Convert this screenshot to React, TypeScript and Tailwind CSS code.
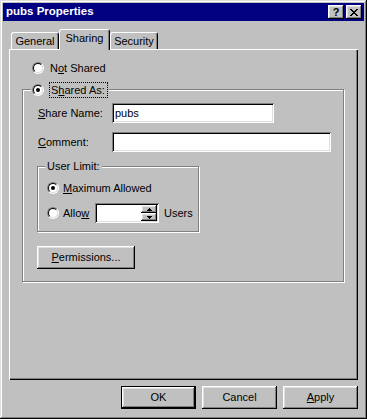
const raised =
  "shadow-[inset_-1px_-1px_#000,inset_1px_1px_#fff,inset_-2px_-2px_#808080,inset_2px_2px_#dfdfdf]"
const sunken =
  "shadow-[inset_1px_1px_#808080,inset_-1px_-1px_#fff,inset_2px_2px_#000,inset_-2px_-2px_#dfdfdf]"
const etched = "border border-[#808080] shadow-[inset_1px_1px_#fff,1px_1px_#fff]"

function Radio({ checked }: { checked?: boolean }) {
  return (
    <span className="block h-[12px] w-[12px] shrink-0 rounded-full border border-t-[#808080] border-l-[#808080] border-b-white border-r-white">
      <span className="flex h-full w-full items-center justify-center rounded-full border border-t-black border-l-black border-b-[#dfdfdf] border-r-[#dfdfdf] bg-white">
        {checked && <span className="h-[4px] w-[4px] rounded-full bg-black" />}
      </span>
    </span>
  )
}

const closeRows = ["11000011", "01100110", "00111100", "00011000", "00111100", "01100110", "11000011"]

function CloseGlyph() {
  return (
    <svg width="8" height="7" viewBox="0 0 8 7" shapeRendering="crispEdges">
      {closeRows.map((row, y) =>
        row.split("").map((c, x) => (c === "1" ? <rect key={`${x}-${y}`} x={x} y={y} width="1" height="1" fill="#000" /> : null))
      )}
    </svg>
  )
}

function Arrow({ up }: { up?: boolean }) {
  return (
    <svg width="5" height="3" viewBox="0 0 5 3" shapeRendering="crispEdges">
      {up ? (
        <>
          <rect x="2" y="0" width="1" height="1" fill="#000" />
          <rect x="1" y="1" width="3" height="1" fill="#000" />
          <rect x="0" y="2" width="5" height="1" fill="#000" />
        </>
      ) : (
        <>
          <rect x="0" y="0" width="5" height="1" fill="#000" />
          <rect x="1" y="1" width="3" height="1" fill="#000" />
          <rect x="2" y="2" width="1" height="1" fill="#000" />
        </>
      )}
    </svg>
  )
}

export default function App() {
  return (
    <div className="h-[419px] w-[367px] bg-[#c0c0c0] p-[3px] font-['Liberation_Sans',Arial,sans-serif] text-[11px] leading-none text-black shadow-[inset_-1px_-1px_#000,inset_1px_1px_#dfdfdf,inset_-2px_-2px_#808080,inset_2px_2px_#fff]">
      {/* Title bar */}
      <div className="flex h-[18px] items-center bg-[#000080] pl-[3px] pr-[2px]">
        <span className="flex-1 text-[11.5px] font-bold text-white">pubs Properties</span>
        <div className={`flex h-[14px] w-[16px] items-center justify-center bg-[#c0c0c0] text-[11px] font-bold ${raised}`}>?</div>
        <div className={`ml-[2px] flex h-[14px] w-[16px] items-center justify-center bg-[#c0c0c0] ${raised}`}>
          <CloseGlyph />
        </div>
      </div>

      {/* Tabs */}
      <div className="mx-[6px] mt-[8px] flex h-[21px] items-end pl-[2px]">
        <div className="mb-px flex h-[17px] w-[48px] items-center justify-center rounded-t-[3px] border-l border-r border-t border-l-white border-r-black border-t-white shadow-[inset_-1px_0_#808080]">
          General
        </div>
        <div className="relative z-10 flex h-[21px] w-[51px] justify-center rounded-t-[3px] border-l border-r border-t border-l-white border-r-black border-t-white bg-[#c0c0c0] pt-[3px] shadow-[inset_-1px_0_#808080]">
          Sharing
        </div>
        <div className="mb-px flex h-[17px] w-[48px] items-center justify-center rounded-t-[3px] border-l border-r border-t border-l-white border-r-black border-t-white shadow-[inset_-1px_0_#808080]">
          Security
        </div>
      </div>

      {/* Panel */}
      <div className="mx-[6px] -mt-px h-[331px] pl-[13px] pt-[11px] shadow-[inset_1px_1px_#fff,inset_-1px_-1px_#000,inset_-2px_-2px_#808080]">
        <div className="ml-[10px] flex h-[16px] items-center">
          <Radio />
          <span className="ml-[6px]">
            N<span className="underline">o</span>t Shared
          </span>
        </div>

        <div className={`relative mt-[13px] w-[322px] pb-[12px] pl-[14px] pt-[13px] ${etched}`}>
          <div className="absolute left-[8px] top-[-8px] flex h-[16px] items-center bg-[#c0c0c0] px-[1px]">
            <Radio checked />
            <span className="ml-[5px] flex h-[16px] items-center border border-dotted border-black px-[1px] pr-[2px]">
              S<span className="underline">h</span>ared As:
            </span>
          </div>

          <div className="flex h-[20px] items-center">
            <span className="ml-px w-[74px]">
              <span className="underline">S</span>hare Name:
            </span>
            <div className={`flex h-[20px] w-[162px] items-center bg-white pl-[3px] ${sunken}`}>pubs</div>
          </div>

          <div className="mt-[9px] flex h-[20px] items-center">
            <span className="ml-px w-[74px]">
              <span className="underline">C</span>omment:
            </span>
            <div className={`h-[20px] w-[219px] bg-white ${sunken}`} />
          </div>

          <div className={`relative mt-[14px] h-[66px] w-[162px] pl-[9px] pt-[13px] ${etched}`}>
            <span className="absolute left-[7px] top-[-9px] flex h-[16px] items-center bg-[#c0c0c0] px-[2px]">User Limit:</span>
            <div className="flex h-[16px] items-center">
              <Radio checked />
              <span className="ml-[4px]">
                <span className="underline">M</span>aximum Allowed
              </span>
            </div>
            <div className="mt-[7px] flex h-[20px] items-center">
              <Radio />
              <span className="ml-[4px] w-[32px]">
                Allo<span className="underline">w</span>
              </span>
              <div className={`flex h-[20px] w-[64px] bg-white p-[2px] ${sunken}`}>
                <div className="flex-1" />
                <div className="flex w-[16px] flex-col">
                  <div className={`flex h-[8px] items-center justify-center bg-[#c0c0c0] ${raised}`}>
                    <Arrow up />
                  </div>
                  <div className={`flex h-[8px] items-center justify-center bg-[#c0c0c0] ${raised}`}>
                    <Arrow />
                  </div>
                </div>
              </div>
              <span className="ml-[5px]">Users</span>
            </div>
          </div>

          <div className={`mt-[14px] flex h-[23px] w-[98px] items-center justify-center ${raised}`}>
            <span>
              <span className="underline">P</span>ermissions...
            </span>
          </div>
        </div>
      </div>

      {/* Dialog buttons */}
      <div className="mt-[6px] flex justify-end gap-[6px] pr-[6px]">
        <div className="h-[23px] w-[75px] border border-black">
          <div className={`flex h-full w-full items-center justify-center ${raised}`}>OK</div>
        </div>
        <div className={`flex h-[23px] w-[75px] items-center justify-center ${raised}`}>Cancel</div>
        <div className={`flex h-[23px] w-[75px] items-center justify-center ${raised}`}>
          <span>
            <span className="underline">A</span>pply
          </span>
        </div>
      </div>
    </div>
  )
}
